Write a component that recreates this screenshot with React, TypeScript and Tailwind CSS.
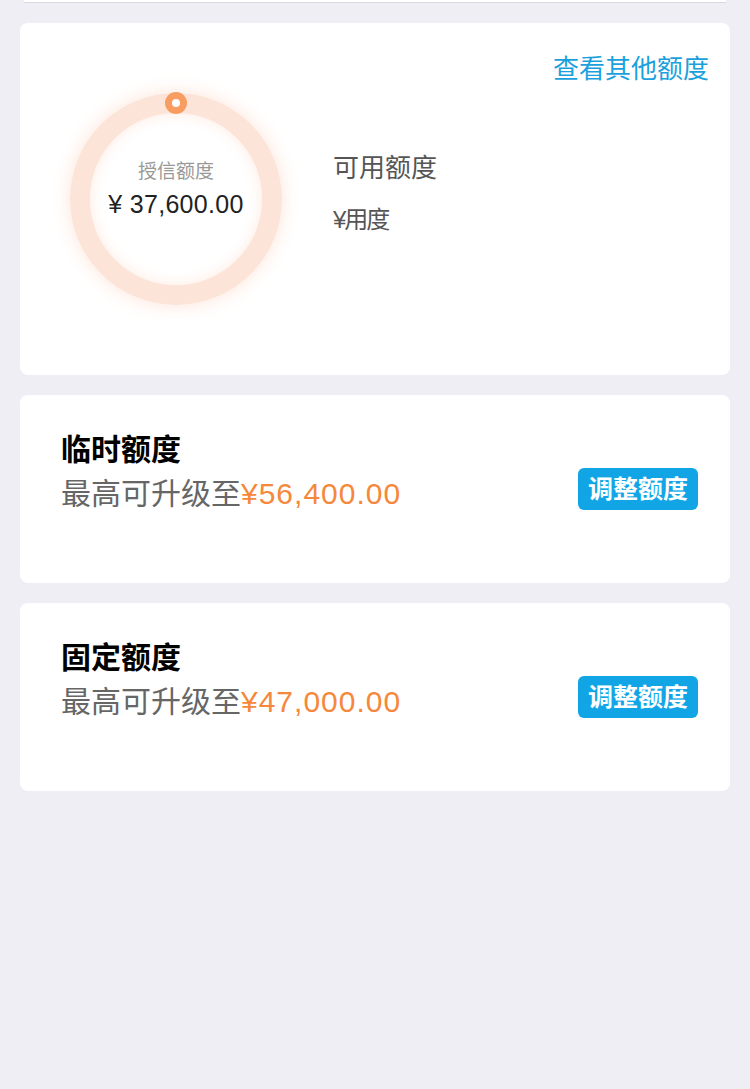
const FONT = { fontFamily: '"Liberation Sans", "Noto Sans CJK SC", sans-serif' }

function QuotaCard({ title, amount }: { title: string; amount: string }) {
  return (
    <div className="mx-[20px] h-[188px] rounded-[8px] bg-white flex justify-between pl-[41px] pr-[32px]">
      <div className="pt-[33px]">
        <div className="text-[30px] leading-[44px] font-bold text-black">{title}</div>
        <div className="text-[30px] leading-[44px] text-[#666]">
          最高可升级至<span className="tracking-[1px] text-[#f5883a]">{amount}</span>
        </div>
      </div>
      <div className="self-center">
        <button className="h-[42px] w-[120px] rounded-[6px] bg-[#12a5e6] text-white text-[25px] font-semibold leading-[42px]">
          调整额度
        </button>
      </div>
    </div>
  )
}

export default function App() {
  return (
    <div className="min-h-[1089px] bg-[#efeef4] pb-10" style={FONT}>
      {/* bottom edge of the card above */}
      <div className="mx-[24px] h-[3px] bg-white border-b border-[#d9d7de]" />

      <div className="mt-[20px] mx-[20px] h-[352px] rounded-[8px] bg-white">
        <div className="flex justify-end pt-[33px] pr-[21px]">
          <span className="text-[26px] leading-[26px] text-[#1aa1dd]">查看其他额度</span>
        </div>

        <div className="flex mt-[11px]">
          <div className="ml-[50px] relative w-[212px] h-[212px]">
            <div className="w-[212px] h-[212px] rounded-full border-[20px] border-[#fde4d8] shadow-[0_0_18px_rgba(252,196,166,0.45),inset_0_0_14px_rgba(252,196,166,0.35)]" />
            <div className="absolute left-[95px] top-[-1px] w-[22px] h-[22px] rounded-full bg-[#f89d61] flex items-center justify-center">
              <div className="w-[8px] h-[8px] rounded-full bg-white" />
            </div>
            <div className="absolute inset-0 flex flex-col items-center pt-[66px]">
              <span className="text-[19px] leading-[26px] text-[#999]">授信额度</span>
              <span className="mt-[4px] text-[25px] leading-[30px] tracking-[0.3px] text-[#222]">¥ 37,600.00</span>
            </div>
          </div>

          <div className="ml-[51px] pt-[60px]">
            <div className="text-[26px] leading-[30px] text-[#555]">可用额度</div>
            <div className="mt-[22px] h-[30px] text-[24px] leading-[30px] tracking-[-2px] text-[#555]">
              ¥用度
            </div>
          </div>
        </div>
      </div>

      <div className="mt-[20px]">
        <QuotaCard title="临时额度" amount="¥56,400.00" />
      </div>
      <div className="mt-[20px]">
        <QuotaCard title="固定额度" amount="¥47,000.00" />
      </div>
    </div>
  )
}
